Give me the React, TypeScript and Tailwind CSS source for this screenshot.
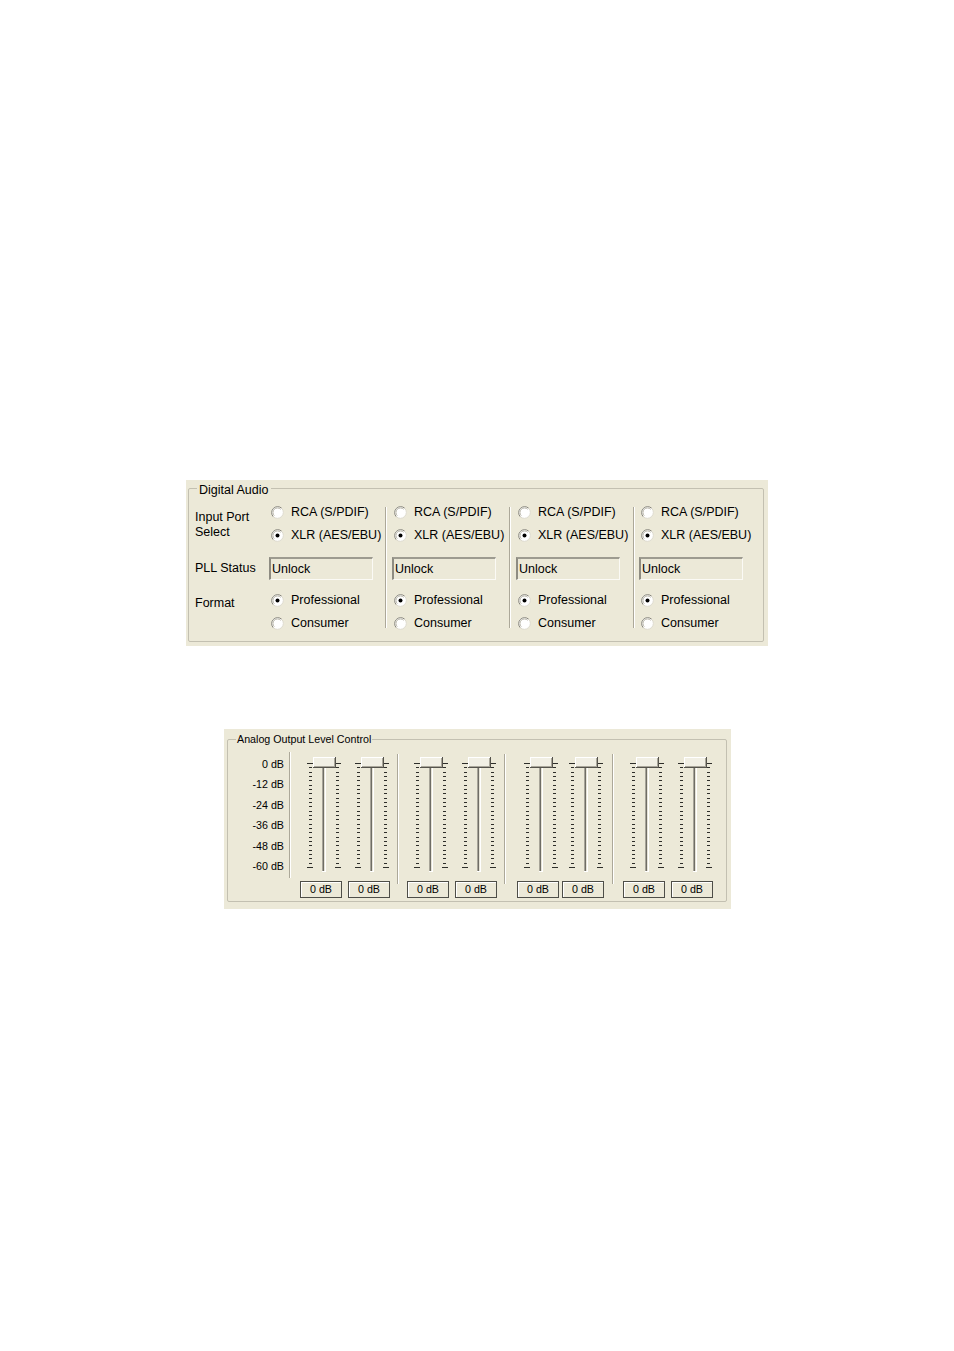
import React from 'react';

const FONT = { fontFamily: '"Liberation Sans", Arial, sans-serif' };

function Radio({ checked }: { checked?: boolean }) {
  return (
    <svg width="13" height="13" viewBox="0 0 13 13" className="shrink-0">
      <circle cx="6.5" cy="6.5" r="6" fill="#ffffff" />
      <path d="M2.26 10.74 A6 6 0 0 1 10.74 2.26" stroke="#86847a" strokeWidth="1" fill="none" />
      <path d="M10.74 2.26 A6 6 0 0 1 2.26 10.74" stroke="#dcd9cc" strokeWidth="1" fill="none" />
      <path d="M3.3 9.7 A4.5 4.5 0 0 1 9.7 3.3" stroke="#b9b6a9" strokeWidth="1" fill="none" />
      {checked && <circle cx="6.5" cy="6.5" r="2" fill="#000" />}
    </svg>
  );
}

function RadioRow({ label, checked, h }: { label: string; checked?: boolean; h: string }) {
  return (
    <div className={`flex items-center pl-[2px] gap-[7px] ${h}`}>
      <Radio checked={checked} />
      <span className="text-[12.5px] leading-[15px] text-black whitespace-nowrap">{label}</span>
    </div>
  );
}

function DigitalColumn({ w, contentW, gap, last }: { w: string; contentW: string; gap: string; last?: boolean }) {
  return (
    <div className={`flex ${w}`}>
      <div className={`flex flex-col pt-[11px] ${contentW}`}>
        <RadioRow label="RCA (S/PDIF)" h="h-[24px]" />
        <RadioRow label="XLR (AES/EBU)" checked h="h-[23px]" />
        <div className="mt-[10px] w-[104px] h-[23px] border-t-2 border-l-2 border-t-[#9d9b90] border-l-[#8e8c82] border-b border-r border-b-[#fbfaf5] border-r-[#fbfaf5] flex items-center pl-[1px]">
          <span className="text-[12.5px] leading-[15px] text-black">Unlock</span>
        </div>
        <div className="mt-[9px]">
          <RadioRow label="Professional" checked h="h-[23px]" />
          <RadioRow label="Consumer" h="h-[23px]" />
        </div>
      </div>
      {!last && (
        <div className={`mt-[18px] h-[121px] w-px bg-[#aca899] border-r border-r-[#ffffff] box-content ${gap}`} />
      )}
    </div>
  );
}

function Slider() {
  const ticks: number[] = [];
  for (let i = 0; i < 25; i++) ticks.push(Math.round(11 + i * 4.33));
  return (
    <svg width="42" height="126" viewBox="0 0 42 126" shapeRendering="crispEdges">
      {ticks.map((y, i) => {
        const end = i === 0 || i === ticks.length - 1;
        return (
          <g key={i}>
            <rect x={end ? 7 : 9} y={y} width={end ? 6 : 3} height="1" fill="#2e2e2a" />
            <rect x={end ? 35 : 36} y={y} width={end ? 6 : 3} height="1" fill="#2e2e2a" />
          </g>
        );
      })}
      <rect x="22" y="15" width="1" height="104" fill="#a7a498" />
      <rect x="23" y="15" width="1" height="104" fill="#6f6d65" />
      <rect x="24" y="15" width="1" height="104" fill="#e6e3d6" />
      <rect x="25" y="15" width="1" height="104" fill="#ffffff" />
      <rect x="22" y="119" width="4" height="1" fill="#ffffff" />
      <rect x="13" y="5" width="23" height="11" fill="#f1efe4" />
      <rect x="13" y="5" width="23" height="1" fill="#ffffff" />
      <rect x="13" y="5" width="1" height="11" fill="#ffffff" />
      <rect x="13" y="15" width="23" height="1" fill="#55534c" />
      <rect x="35" y="5" width="1" height="11" fill="#55534c" />
      <rect x="14" y="14" width="21" height="1" fill="#a9a69a" />
      <rect x="34" y="6" width="1" height="9" fill="#a9a69a" />
    </svg>
  );
}

function SliderCol({ ml }: { ml: string }) {
  return (
    <div className={`flex flex-col w-[42px] ${ml}`}>
      <Slider />
      <div className="mt-[3px] h-[17px] w-[42px] border border-[#4e4e48] shadow-[inset_1px_1px_0_#ffffff] flex items-center justify-center">
        <span className="text-[10.7px] leading-[13px] text-black">0 dB</span>
      </div>
    </div>
  );
}

function Sep({ ml, mt, h }: { ml: string; mt: string; h: string }) {
  return <div className={`w-px bg-[#aca899] border-r border-r-[#ffffff] box-content ${ml} ${mt} ${h}`} />;
}

export default function App() {
  const dbLabels = ['0 dB', '-12 dB', '-24 dB', '-36 dB', '-48 dB', '-60 dB'];
  return (
    <div className="w-[954px] h-[1351px] bg-white overflow-hidden" style={FONT}>
      {/* Digital Audio panel */}
      <div className="ml-[186px] mt-[480px] w-[582px] h-[166px] bg-[#ece9d8] pt-[8px] pl-[2px]">
        <div className="relative w-[576px] h-[154px] border border-[#c3c0b1] rounded-[2px] flex">
          <span className="absolute left-[8px] top-[-7px] px-[2px] bg-[#ece9d8] text-[12.5px] leading-[16px] text-black whitespace-nowrap">
            Digital Audio
          </span>
          <div className="w-[81px] pl-[6px] pt-[10px] flex flex-col text-[12.5px] text-black">
            <div className="mt-[10.5px] leading-[15px]">
              Input Port
              <br />
              Select
            </div>
            <div className="mt-[21px] leading-[15px] whitespace-nowrap">PLL Status</div>
            <div className="mt-[20px] leading-[15px]">Format</div>
          </div>
          <div className="flex">
            <DigitalColumn w="w-[123px]" contentW="w-[116px]" gap="mr-[5px]" />
            <DigitalColumn w="w-[124px]" contentW="w-[117px]" gap="mr-[5px]" />
            <DigitalColumn w="w-[123px]" contentW="w-[117px]" gap="mr-[4px]" />
            <DigitalColumn w="w-[124px]" contentW="w-[120px]" gap="" last />
          </div>
        </div>
      </div>

      {/* Analog Output Level Control panel */}
      <div className="ml-[224px] mt-[83px] w-[507px] h-[180px] bg-[#ece9d8] pt-[10px] pl-[3px]">
        <div className="relative w-[500px] h-[163px] border border-[#c3c0b1] rounded-[2px] flex items-start pt-[12px]">
          <span className="absolute left-[8px] top-[-8px] px-[1px] bg-[#ece9d8] text-[10.7px] leading-[14px] text-black whitespace-nowrap">
            Analog Output Level Control
          </span>
          <div className="w-[56px] pt-[6px] flex flex-col gap-[8.4px] text-right">
            {dbLabels.map((l) => (
              <div key={l} className="text-[10.7px] leading-[12px] text-black whitespace-nowrap">
                {l}
              </div>
            ))}
          </div>
          <Sep ml="ml-[5px]" mt="mt-0" h="h-[126px]" />
          <SliderCol ml="ml-[9px]" />
          <SliderCol ml="ml-[6px]" />
          <Sep ml="ml-[7px]" mt="mt-[2px]" h="h-[130px]" />
          <SliderCol ml="ml-[8px]" />
          <SliderCol ml="ml-[6px]" />
          <Sep ml="ml-[7px]" mt="mt-[2px]" h="h-[130px]" />
          <SliderCol ml="ml-[11px]" />
          <SliderCol ml="ml-[3px]" />
          <Sep ml="ml-[8px]" mt="mt-[2px]" h="h-[130px]" />
          <SliderCol ml="ml-[9px]" />
          <SliderCol ml="ml-[6px]" />
        </div>
      </div>
    </div>
  );
}
